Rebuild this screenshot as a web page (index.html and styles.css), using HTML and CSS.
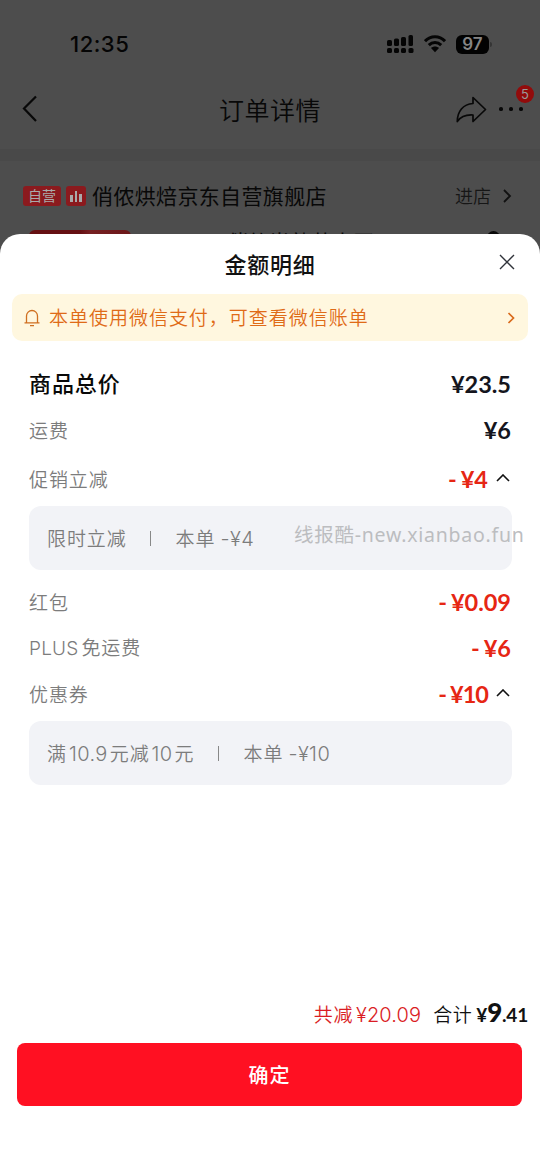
FILE: index.html
```html
<!DOCTYPE html>
<html lang="zh-CN">
<head>
<meta charset="utf-8">
<title>订单详情</title>
<link rel="stylesheet" href="styles.css">
</head>
<body>
<div class="screen">
  <header class="status">
    <span class="time">12:35</span>
    <div class="status-icons">
      <svg class="signal" width="28" height="20" viewBox="0 0 28 20"><g fill="#050505"><rect x="0" y="6" width="5" height="6" rx="1.6"/><rect x="7" y="4.500" width="5" height="7.500" rx="1.600"/><rect x="14" y="3" width="5" height="9" rx="1.600"/><rect x="21.500" y="1" width="4.500" height="11" rx="1.600"/><rect x="0" y="14" width="5" height="5" rx="1.600"/><rect x="7" y="14" width="5" height="5" rx="1.600"/><rect x="14" y="14" width="5" height="5" rx="1.600"/><rect x="21.500" y="14" width="5" height="5" rx="1.600"/></g></svg>
      <svg class="wifi" width="22" height="18" viewBox="0 0 22 18"><g fill="none" stroke="#050505" stroke-width="3"><path d="M1 6.200C6.600.4 15.400.4 21 6.200"/><path d="M4.800 10.200c3.600-3.500 8.800-3.500 12.400 0"/></g><path d="M7 13c2.400-2 5.600-2 8 0l-4 4.300z" fill="#050505"/></svg>
      <span class="battery">97</span><i class="battery-tip"></i>
    </div>
  </header>
  <nav class="nav">
    <svg class="back" width="16" height="28" viewBox="0 0 16 28"><path d="M14 1.500 2 13.500 14 26" fill="none" stroke="#080808" stroke-width="2.200"/></svg>
    <h1>订单详情</h1>
    <div class="nav-actions">
      <svg width="31" height="27" viewBox="0 0 31 27"><path d="M17 1.500 29.500 13.500 17 25.500v-6.500C9.500 18.500 5 20.200 1.300 25.500 1.300 15.500 7 8 17 7.500z" fill="none" stroke="#080808" stroke-width="1.700" stroke-linejoin="round"/></svg>
      <span class="more"><i></i><i></i><i></i><b class="badge">5</b></span>
    </div>
  </nav>
  <div class="band"></div>
  <section class="shop">
    <div class="shop-row">
      <span class="tag">自营</span>
      <span class="tag chart"><i></i><i></i><i></i></span>
      <strong>俏侬烘焙京东自营旗舰店</strong>
      <span class="enter">进店</span>
      <svg width="10" height="14" viewBox="0 0 10 14"><path d="m2 1 6 6-6 6" fill="none" stroke="#111" stroke-width="1.800"/></svg>
    </div>
    <div class="product"><i class="thumb"></i><span class="product-name">俏侬半熟芝士蛋</span><i class="dot"></i></div>
  </section>
  <main class="sheet">
    <div class="sheet-head">
      <h2>金额明细</h2>
      <svg class="close" width="16" height="16" viewBox="0 0 16 16"><path d="m1 1 14 14M15 1 1 15" stroke="#30333a" stroke-width="1.400"/></svg>
    </div>
    <div class="notice">
      <svg width="16" height="18" viewBox="0 0 16 18"><g fill="none" stroke="#cf6f20" stroke-width="1.300"><path d="M2.500 13.500V7a5.500 5.500 0 0 1 11 0v6.500M.5 13.800h15M6 16.700h4"/></g></svg>
      <span>本单使用微信支付，可查看微信账单</span>
      <svg width="8" height="12" viewBox="0 0 8 12"><path d="m1.500 1 5 5-5 5" fill="none" stroke="#d96a1b" stroke-width="1.700"/></svg>
    </div>
    <div class="details">
      <div class="row total"><span>商品总价</span><b class="amount">¥23.5</b></div>
      <div class="row ship"><span>运费</span><b class="amount">¥6</b></div>
      <div class="row promo"><span>促销立减</span><b class="amount red"><i>-</i>¥4</b><svg class="up" width="14" height="8" viewBox="0 0 14 8"><path d="m1 7 6-6 6 6" fill="none" stroke="#111" stroke-width="1.600"/></svg></div>
      <div class="box"><span>限时立减</span><i></i><span>本单 <em>-¥4</em></span><span class="watermark">线报酷-new.xianbao.fun</span></div>
      <div class="row packet"><span>红包</span><b class="amount red"><i>-</i>¥0.09</b></div>
      <div class="row"><span><em>PLUS</em>免运费</span><b class="amount red"><i>-</i>¥6</b></div>
      <div class="row coupon"><span>优惠券</span><b class="amount red tight"><i>-</i>¥10</b><svg class="up" width="14" height="8" viewBox="0 0 14 8"><path d="m1 7 6-6 6 6" fill="none" stroke="#111" stroke-width="1.600"/></svg></div>
      <div class="box"><span>满<em class="num">10.9</em>元减<em class="num">10</em>元</span><i></i><span>本单 <em>-¥10</em></span></div>
    </div>
    <footer class="footer">
      <div class="summary"><span class="saved">共减<em>¥20.09</em></span><span class="sum">合计<b>¥<big>9</big>.41</b></span></div>
      <button class="confirm">确定</button>
    </footer>
  </main>
</div>
</body>
</html>
```
FILE: styles.css
```css
* { box-sizing: border-box; }
body { margin: 0; font-family: "Noto Sans CJK SC", sans-serif; }
i, em { font-style: normal; }
h1, h2 { margin: 0; }
svg { display: block; flex: none; }
.screen { width: 540px; height: 1174px; background: #4d4d4d; display: flex; flex-direction: column; overflow: hidden; }
.status { height: 76px; padding: 12px 48px 0 70px; display: flex; align-items: center; justify-content: space-between; flex: none; }
.time { font: 500 22px/24px Inter, sans-serif; letter-spacing: .5px; color: #050505; }
.status-icons { display: flex; align-items: center; }
.wifi { margin: 0 10px 0 9px; }
.battery { width: 33px; height: 19px; border-radius: 6px; background: #020202; color: #858585; font: 600 17px/19px Inter, sans-serif; text-align: center; }
.battery-tip { width: 2px; height: 5px; border-radius: 0 2px 2px 0; background: #353535; margin-left: 1px; }
.nav { height: 73px; padding: 0 16px 7px 22px; display: flex; align-items: center; flex: none; }
.nav h1 { flex: 1; padding-left: 46px; text-align: center; font-size: 25px; line-height: 36px; font-weight: 350; letter-spacing: .5px; color: #080808; }
.nav-actions { display: flex; align-items: center; gap: 12px; }
.more { position: relative; display: flex; gap: 6.500px; margin-right: 1px; }
.more i { width: 3.700px; height: 3.700px; border-radius: 50%; background: #080808; }
.badge { position: absolute; left: 17px; top: -22px; width: 18px; height: 18px; border-radius: 50%; background: #920b0b; color: #999; font: 400 13px/18px Inter, sans-serif; text-align: center; }
.band { height: 12px; background: #494949; flex: none; }
.shop { height: 73px; flex: none; display: flex; flex-direction: column; overflow: hidden; }
.shop-row { height: 69px; padding: 0 28px 0 23px; display: flex; align-items: center; flex: none; }
.tag { width: 38px; height: 20px; border-radius: 3px; background: #8b1a1e; color: #aaa; font-size: 14px; line-height: 18px; text-align: center; }
.chart { width: 20px; margin: 0 6px 0 5px; display: flex; align-items: flex-end; justify-content: center; gap: 2px; padding-bottom: 4px; }
.chart i { width: 2.500px; height: 7px; background: #aaa; }
.chart i:nth-child(2) { height: 11px; }
.chart i:nth-child(3) { height: 8px; }
.shop-row strong { flex: 1; padding-bottom: 2px; font-size: 21px; line-height: 30px; font-weight: 400; letter-spacing: .35px; color: #080808; }
.enter { font-size: 18px; line-height: 26px; padding-bottom: 2px; font-weight: 350; color: #161616; margin-right: 11px; }
.product { height: 30px; flex: none; padding: 0 40px 0 29px; display: flex; align-items: flex-start; }
.thumb { width: 102px; height: 26px; border-radius: 6px; background: linear-gradient(90deg, #651012 50%, #762022 60%, #6b1719); }
.product-name { flex: 1; padding-left: 96px; font-size: 21px; line-height: 22px; color: #080808; }
.dot { width: 13px; height: 13px; margin-top: 1px; border-radius: 50%; background: #080808; }
.sheet { height: 940px; flex: none; border-radius: 20px 20px 0 0; background: #fff; display: flex; flex-direction: column; }
.sheet-head { height: 60px; display: flex; align-items: center; padding: 0 25px 0 41px; flex: none; }
.sheet-head h2 { flex: 1; padding-bottom: 2px; text-align: center; font-size: 22px; line-height: 32px; font-weight: 500; letter-spacing: .7px; color: #111; }
.close { margin-top: -4px; }
.notice { height: 47px; margin: 0 12px; padding: 0 13px 0 12px; border-radius: 10px; background: #fff7df; color: #df6b17; display: flex; align-items: center; flex: none; }
.notice span { flex: 1; padding: 0 0 1px 9px; font-weight: 350; font-size: 19px; line-height: 28px; letter-spacing: .98px; }
.details { padding: 20px 28px 0 29px; flex: 1; }
.row { height: 46px; padding-right: 1px; display: flex; align-items: center; color: #7c7c7c; font-size: 19px; font-weight: 350; line-height: 28px; letter-spacing: .9px; }
.row > span { flex: 1; padding-bottom: 2px; }
.row em { font-family: Inter, sans-serif; font-weight: 350; letter-spacing: .2px; margin-right: 3px; }
.total { color: #080808; font-size: 22px; font-weight: 500; }
.total > span { padding-bottom: 4px; }
.ship { height: 47px; }
.promo { height: 52px; }
.amount { padding-bottom: 2px; font: 700 23.500px/28px Lato, sans-serif; letter-spacing: 0; color: #14151d; }
.total .amount { padding-bottom: 0; }
.amount i { margin-right: 4px; }
.tight { letter-spacing: -1px; }
.red { color: #e62613; }
.up { margin: -4px 1px 0 8px; }
.box { position: relative; height: 64px; padding: 0 18px; border-radius: 12px; background: #f2f3f7; color: #7c7c7c; display: flex; align-items: center; font-size: 19px; font-weight: 350; line-height: 28px; letter-spacing: .9px; }
.box > i { width: 1px; height: 15px; background: #888; margin: 0 25px 0 23px; }
.box em { font-family: Inter, sans-serif; font-size: 20px; font-weight: 350; letter-spacing: .4px; }
.box .num { margin: 0 2px; }
.watermark { position: absolute; left: 265px; top: 15px; color: #bcbdc0; font: 400 19.500px/28px "Noto Sans", "Noto Sans CJK SC", sans-serif; letter-spacing: .75px; white-space: nowrap; }
.packet { margin-top: 10px; }
.coupon { margin-bottom: 3px; }
.footer { height: 190px; flex: none; padding: 14px 12px 0 17px; }
.summary { height: 32px; display: flex; justify-content: flex-end; align-items: center; margin-bottom: 13px; }
.saved, .sum { font-size: 19px; font-weight: 350; line-height: 30px; letter-spacing: .6px; }
.saved { color: #da1c24; margin-right: 12px; }
.saved em { font-family: Inter, sans-serif; font-size: 20px; font-weight: 350; margin-left: 3px; letter-spacing: .1px; }
.sum { color: #111; padding-bottom: 1px; }
.sum b { font-family: Lato, sans-serif; letter-spacing: -.2px; margin-left: 4px; }
.sum big { font-size: 26px; font-weight: 900; }
.confirm { display: block; width: 505px; height: 63px; border: 0; padding: 0; border-radius: 8px; background: #ff1022; color: #fff; font: 500 20px/28px "Noto Sans CJK SC", sans-serif; letter-spacing: 1px; }
```
